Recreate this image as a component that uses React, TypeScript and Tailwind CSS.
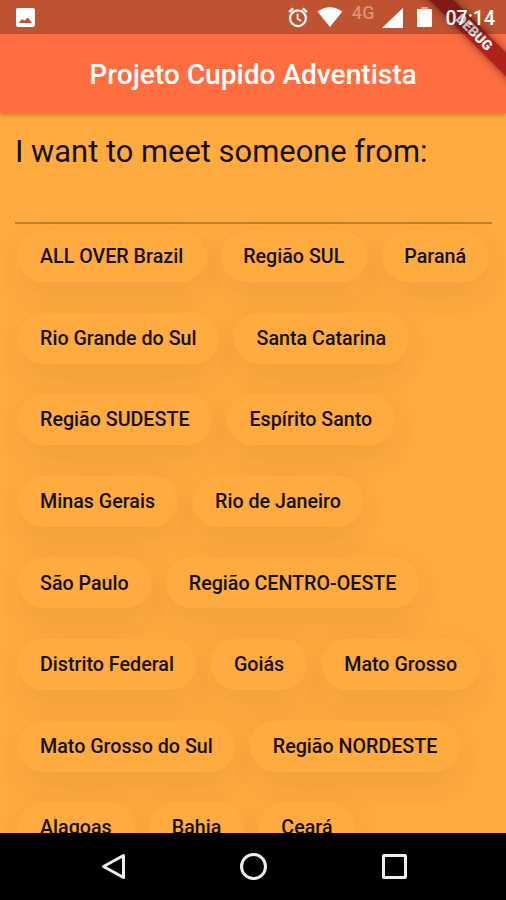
const rows: string[][] = [
  ["ALL OVER Brazil", "Região SUL", "Paraná"],
  ["Rio Grande do Sul", "Santa Catarina"],
  ["Região SUDESTE", "Espírito Santo"],
  ["Minas Gerais", "Rio de Janeiro"],
  ["São Paulo", "Região CENTRO-OESTE"],
  ["Distrito Federal", "Goiás", "Mato Grosso"],
  ["Mato Grosso do Sul", "Região NORDESTE"],
  ["Alagoas", "Bahia", "Ceará"],
];

// Translucent scrim that sits above both the app bar colour and the corner ribbon.
function StatusBar() {
  return (
    <div className="shrink-0 bg-[#ff6e40]">
      <div className="relative z-30 flex h-[34px] items-center bg-black/25 pl-4 pr-[11px] text-white">
        <svg className="h-[19px] w-[19px]" viewBox="0 0 19 19">
          <rect width="19" height="19" rx="2" fill="#fff" />
          <path d="M3 15l3-4 2.300 1.700L12 9.500l4 5.500z" fill="#be522f" />
        </svg>
        <svg className="ml-[253px] h-[21px] w-5" viewBox="0 0 20 21" fill="none" stroke="#fff">
          <circle cx="10" cy="11.2" r="7.9" strokeWidth="2.2" />
          <path d="M1 5l4.200-3.600M19 5l-4.200-3.600" strokeWidth="2.200" />
          <path d="M9.600 6.800v5l3.700 2.200" strokeWidth="1.800" />
        </svg>
        <svg className="ml-[9px] h-5 w-[26px]" viewBox="0 0 26 20">
          <path d="M0.500 4.500Q13-4 25.500 4.500L13 20z" fill="#fff" />
        </svg>
        <span className="-mt-[8px] ml-[9px] w-[26px] text-[18px] font-medium leading-5 tracking-[0.3px] text-[#e0916f]">4G</span>
        <svg className="ml-[4px] mt-[2px] h-5 w-[21px]" viewBox="0 0 21 20">
          <path d="M21 0v20H0z" fill="#fff" />
        </svg>
        <svg className="ml-[14px] h-5 w-[15px]" viewBox="0 0 15 20">
          <path d="M4 0h7v2h3q1 0 1 1v16q0 1-1 1H1q-1 0-1-1V3q0-1 1-1h3z" fill="#fff" />
          <path d="M4 0h7v2.500H4z" fill="#e0a48c" />
        </svg>
        <span className="ml-[14px] mt-[3px] whitespace-nowrap text-[19.500px] font-medium leading-5">07:14</span>
      </div>
    </div>
  );
}

export default function App() {
  return (
    <div
      className="relative flex h-[900px] w-[506px] flex-col overflow-hidden bg-[#ffab40]"
      style={{ fontFamily: 'Roboto, "Noto Sans", sans-serif' }}
    >
      <StatusBar />
      <header className="relative z-10 flex h-[79px] shrink-0 items-center justify-center bg-[#ff6e40] pt-[3px] text-[28.100px] font-medium text-white shadow-[0_2px_5px_rgba(90,60,0,0.4)] [clip-path:inset(0_0_-12px_0)]">
        <span className="whitespace-nowrap">Projeto Cupido Adventista</span>
      </header>
      <main className="flex min-h-0 flex-1 flex-col overflow-hidden pl-[15px] pr-[14px]">
        <h1 className="mt-[18px] h-[40px] whitespace-nowrap text-[30.900px] leading-[41px] text-[#151006]">
          I want to meet someone from:
        </h1>
        <div className="mt-[51px] h-[2px] shrink-0 bg-[#bd7f30]" />
        <div className="mt-[7px] flex shrink-0 flex-col gap-[30.600px] pl-[2.500px]">
          {rows.map((row) => (
            <div key={row[0]} className="flex gap-[15px]">
              {row.map((label) => (
                <button
                  key={label}
                  className="h-[51px] whitespace-nowrap rounded-[25px] bg-[#ffab40] px-[22.500px] pt-[1px] text-[19.680px] font-medium text-[#151006] shadow-[0_14px_28px_rgba(90,60,30,0.045),0_11px_44px_rgba(90,60,30,0.06)]"
                >
                  {label}
                </button>
              ))}
            </div>
          ))}
        </div>
      </main>
      <nav className="relative z-10 flex h-[67px] shrink-0 items-center bg-black">
        <svg className="ml-[101px] h-[28px] w-[25px]" viewBox="0 0 25 28">
          <path d="M22.500 2.500v22L2.500 13.500z" fill="none" stroke="#eee" strokeWidth="3" strokeLinejoin="round" />
        </svg>
        <span className="ml-[114px] h-[27px] w-[27px] rounded-full border-[3px] border-[#eee]" />
        <span className="ml-[115px] h-[25px] w-[25px] rounded-[2px] border-[3px] border-[#eee]" />
      </nav>
      <div className="pointer-events-none absolute right-0 top-0 z-20 h-[100px] w-[100px] overflow-hidden">
        <div className="absolute left-[-7px] top-[24px] flex h-[17px] w-[150px] rotate-45 items-center justify-center bg-[#a81818]/90 text-[14px] font-black text-white shadow-[0_0_8px_rgba(0,0,0,0.5)]">
          DEBUG
        </div>
      </div>
    </div>
  );
}
